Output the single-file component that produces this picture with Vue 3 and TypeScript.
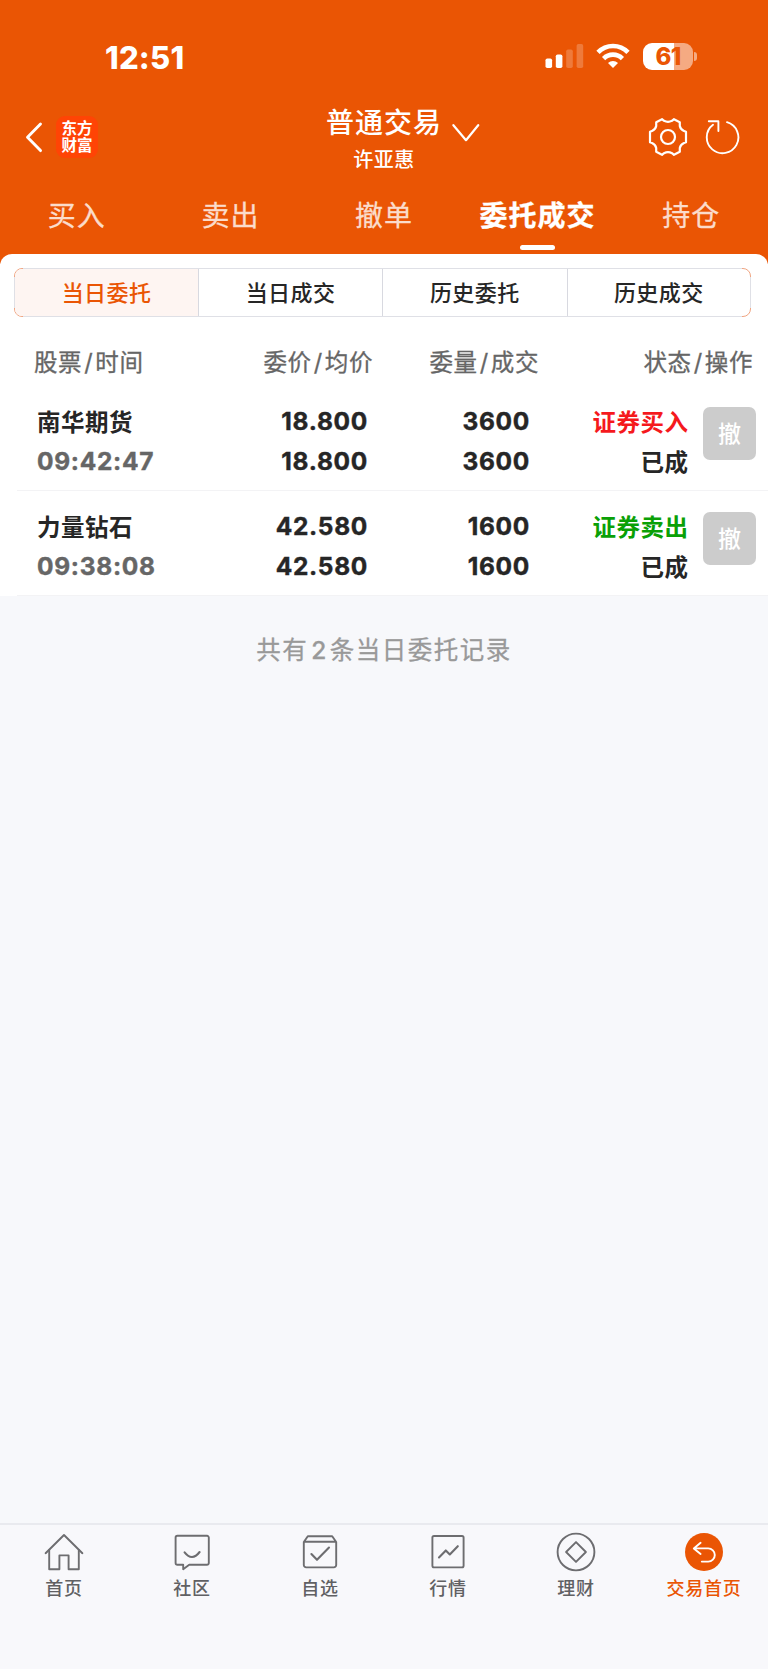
<script setup lang="ts">
interface Order {
  name: string
  time: string
  price: string
  avg: string
  qty: string
  filled: string
  side: string
  kind: 'buy' | 'sell'
  state: string
}

const tabs: string[] = ['买入', '卖出', '撤单', '委托成交', '持仓']
const activeTab = '委托成交'
const segments: string[] = ['当日委托', '当日成交', '历史委托', '历史成交']
const activeSegment = '当日委托'
const columns: [string, string][] = [['股票', '时间'], ['委价', '均价'], ['委量', '成交'], ['状态', '操作']]
const orders: Order[] = [
  { name: '南华期货', time: '09:42:47', price: '18.800', avg: '18.800', qty: '3600', filled: '3600', side: '证券买入', kind: 'buy', state: '已成' },
  { name: '力量钻石', time: '09:38:08', price: '42.580', avg: '42.580', qty: '1600', filled: '1600', side: '证券卖出', kind: 'sell', state: '已成' },
]
const navItems: { id: string; label: string }[] = [
  { id: 'home', label: '首页' },
  { id: 'community', label: '社区' },
  { id: 'watch', label: '自选' },
  { id: 'market', label: '行情' },
  { id: 'wealth', label: '理财' },
  { id: 'trade', label: '交易首页' },
]
</script>

<template>
  <div class="screen">
    <header class="top">
      <div class="status">
        <span class="clock">12:51</span>
        <div class="indicators">
          <svg class="signal" width="39" height="26" viewBox="0 0 39 26" fill="#fff">
            <rect x="0.5" y="15.5" width="6.6" height="9.5" rx="1.8" />
            <rect x="10.8" y="11.5" width="6.6" height="13.5" rx="1.8" />
            <rect x="21.2" y="6.5" width="6.6" height="18.5" rx="1.8" opacity=".22" />
            <rect x="31.6" y="1" width="6.6" height="24" rx="1.8" opacity=".22" />
          </svg>
          <svg class="wifi" width="34" height="26" viewBox="0 0 34 26">
            <g fill="none" stroke="#fff" stroke-width="4.6">
              <path d="M2 9.4C10.2.9 23.8.9 32 9.4" />
              <path d="M7.6 15.6C12.9 10.3 21.1 10.3 26.4 15.6" />
            </g>
            <path d="M12 20C14.8 17.3 19.2 17.3 22 20L17 25Z" fill="#fff" />
          </svg>
          <div class="battery"><span class="level">61</span><i class="tip"></i></div>
        </div>
      </div>
      <div class="navbar">
        <div class="left">
          <svg width="18" height="32" viewBox="0 0 18 32" fill="none" stroke="#fff" stroke-width="2.9" stroke-linecap="round" stroke-linejoin="round">
            <path d="M15.5 3 2.5 16.2 15.5 29.6" />
          </svg>
          <div class="logo"><span>东方</span><span>财富</span></div>
        </div>
        <div class="middle">
          <div class="title">
            <span class="title-text">普通交易</span>
            <svg width="28" height="18" viewBox="0 0 28 18" fill="none" stroke="#fff" stroke-width="2.2" stroke-linecap="round" stroke-linejoin="round">
              <path d="M1.4 1.2 14 16.2 26.2 1.2" />
            </svg>
          </div>
          <div class="account">许亚惠</div>
        </div>
        <div class="right">
          <svg width="40" height="40" viewBox="-20 -20 40 40" fill="none" stroke="#fff" stroke-width="2.2" stroke-linejoin="round">
            <path d="M-6-17.8L-4-16.2Q0-14.2 4-16.2L6-17.8L11.8-14.8V-11Q12.6-7.4 16-6L18-5.2V5.2L16 6Q12.6 7.4 11.8 11V14.8L6 17.8L4 16.2Q0 14.2-4 16.2L-6 17.8L-11.8 14.8V11Q-12.6 7.4-16 6L-18 5.2V-5.2L-16-6Q-12.6-7.4-11.8-11V-14.8Z" />
            <circle r="7" />
          </svg>
          <svg width="36" height="36" viewBox="0 0 36 36" fill="none" stroke="#fff" stroke-width="1.9" stroke-linecap="round" stroke-linejoin="round">
            <path d="M22 3.2A15.8 15.8 0 1 1 8 5.8" />
            <path d="M3.8 2.3H13.4V12" />
          </svg>
        </div>
      </div>
      <nav class="tabs">
        <span v-for="t in tabs" :key="t" class="tab" :class="{ on: t === activeTab }">{{ t }}</span>
      </nav>
    </header>

    <main class="panel">
      <div class="segments">
        <span v-for="s in segments" :key="s" class="segment" :class="{ on: s === activeSegment }">{{ s }}</span>
      </div>
      <div class="grid head">
        <span v-for="c in columns" :key="c[0]" class="cell">{{ c[0] }}<i class="slash">/</i>{{ c[1] }}</span>
      </div>
      <div v-for="o in orders" :key="o.name" class="grid order">
        <div class="cell"><span>{{ o.name }}</span><span class="num time">{{ o.time }}</span></div>
        <div class="cell num"><span>{{ o.price }}</span><span>{{ o.avg }}</span></div>
        <div class="cell num"><span>{{ o.qty }}</span><span>{{ o.filled }}</span></div>
        <div class="cell"><span :class="o.kind">{{ o.side }}</span><span>{{ o.state }}</span></div>
        <button class="cancel">撤</button>
      </div>
    </main>

    <p class="summary">共有<b>2</b>条当日委托记录</p>

    <footer class="bottom">
      <div v-for="n in navItems" :key="n.id" class="item" :class="n.id">
        <svg width="40" height="40" viewBox="-20 -20 40 40" fill="none" stroke="#6d6d70" stroke-width="1.9" stroke-linejoin="round" stroke-linecap="round">
          <g v-if="n.id === 'home'">
            <path d="M-18.4 1.2 0-17 18.4 1.2" />
            <path d="M-14.8-2V17.3H-4.6V3.4H4.6V17.3H14.8V-2" />
          </g>
          <g v-else-if="n.id === 'community'">
            <path d="M-14.6-16.2H15a1.8 1.8 0 0 1 1.8 1.8V11A1.8 1.8 0 0 1 15 12.8H-2.8L-8.8 17.2V12.8H-14.6A1.8 1.8 0 0 1-16.4 11V-14.4A1.8 1.8 0 0 1-14.6-16.2Z" />
            <path d="M-7.4.4Q0 9.8 7.6 0" stroke-width="2.1" />
          </g>
          <g v-else-if="n.id === 'watch'">
            <path d="M-16.2-10-12.2-15.8H12.2L16.2-10V13a2.4 2.4 0 0 1-2.4 2.4H-13.8A2.4 2.4 0 0 1-16.2 13ZM-16-10.2H16" />
            <path d="M-8.6 2-3 7.8 9-4.4" stroke-width="2.1" />
          </g>
          <g v-else-if="n.id === 'market'">
            <rect x="-15.6" y="-16" width="31.2" height="31.4" rx="1.6" />
            <path d="M-9 5.4-2.2-1.6 1.8 2.4 9.8-5.8" stroke-width="2.1" />
          </g>
          <g v-else-if="n.id === 'wealth'">
            <circle r="18.4" />
            <path d="M0-9.9 9.9 0 0 9.9-9.9 0Z" />
          </g>
          <g v-else>
            <circle r="19" fill="#ea5504" stroke="none" />
            <path d="M-3.4-9.2-10.2-3.6-3.4 2M-10-3.6H4.2a6.5 6.5 0 0 1 0 13.2H-2.2" stroke="#fff" />
          </g>
        </svg>
        <span>{{ n.label }}</span>
      </div>
    </footer>
  </div>
</template>

<style>
html, body { margin: 0; background: #f7f8fb; }
</style>

<style scoped>
* { box-sizing: border-box; }
.screen {
  width: 768px; height: 1669px; display: flex; flex-direction: column; overflow: hidden;
  background: #f7f8fb; color: #262626;
  font-family: "Noto Sans CJK SC", Inter, sans-serif;
}
.top { height: 264px; flex: none; background: #ea5504; color: #fff; }
.status { height: 90px; padding: 37px 70px 0 105px; display: flex; justify-content: space-between; }
.clock { font: 800 31px/41px Inter, sans-serif; letter-spacing: 0.2px; }
.indicators { height: 40px; display: flex; align-items: flex-start; padding-top: 6px; }
.wifi { margin-left: 12px; }
.battery {
  position: relative; width: 50px; height: 27px; margin: 0 5px 0 13px; border-radius: 9px;
  background: linear-gradient(90deg, #fff 61%, #f5aa82 61%);
}
.level { display: block; text-align: center; font: 800 24px/27px Inter, sans-serif; color: #ea5504; letter-spacing: -0.8px; }
.tip { position: absolute; left: 51px; top: 9px; width: 3px; height: 9px; border-radius: 0 4px 4px 0; background: #f5aa82; }
.navbar { height: 90px; display: grid; grid-template-columns: 1fr 240px 1fr; }
.left { display: flex; align-items: center; padding-left: 25px; height: 93px; }
.logo {
  width: 42px; height: 42px; margin-left: 13px; border-radius: 9px; background: #ff4405;
  display: flex; flex-direction: column; align-items: center; padding-top: 3px;
}
.logo span { font-weight: 700; font-size: 15.5px; line-height: 17.4px; }
.middle { padding-top: 16px; }
.title { display: grid; grid-template-columns: 1fr auto 1fr; height: 30px; }
.title-text {
  grid-column: 2; font-weight: 500; font-size: 28px; line-height: 31px; letter-spacing: 1px;
}
.title svg { margin: 18px 0 0 10px; }
.account { margin-top: 10.5px; text-align: center; font-weight: 500; font-size: 20px; line-height: 24px; letter-spacing: 0.5px; }
.right { display: flex; align-items: center; justify-content: flex-end; height: 93px; padding-right: 27.3px; gap: 17px; }
.tabs { display: grid; grid-template-columns: repeat(5, 1fr); }
.tab {
  height: 71px; text-align: center; font-size: 28px; line-height: 68px; letter-spacing: 1px; color: #fbdccb;
  -webkit-text-stroke: 0.3px currentColor;
}
.tab.on { font-weight: 700; color: #fff; }
.tab.on::after {
  content: ""; display: block; width: 35px; height: 5px; margin: -3px auto 0; border-radius: 3px; background: #fff;
}
.panel { flex: none; margin-top: -10px; border-radius: 12px 12px 0 0; background: #fff; padding-top: 14px; }
.segments {
  position: relative; height: 49px; margin: 0 17px 0 14px; display: grid; grid-template-columns: 183px 184px 184.5px 1fr;
  border: 1px solid #f0a582; border-radius: 8px;
}
.segments::before, .segments::after { content: ""; position: absolute; pointer-events: none; }
.segments::before { inset: -1px 8px; border: solid #dfe0e6; border-width: 1px 0; }
.segments::after { inset: 8px -1px; border: solid #dfe0e6; border-width: 0 1px; }
.segment {
  text-align: center; font-weight: 500; font-size: 22px; line-height: 45px; letter-spacing: 0.4px;
  border-left: 1px solid #d8d9e0;
}
.segment:first-child { border-left: 0; border-radius: 7px 0 0 7px; }
.segment.on { background: #fef5f2; color: #ea5504; }
.grid { display: grid; grid-template-columns: 204px 169px 166px 149px 1fr; }
.head {
  height: 69px; color: #666; font-size: 23.5px; line-height: 89px; letter-spacing: 0.6px;
  -webkit-text-stroke: 0.3px currentColor;
}
.head .cell { text-align: right; }
.head .cell:first-child { text-align: left; padding-left: 34px; }
.head .cell:last-child { grid-column: 4 / 6; padding-right: 15px; }
.slash { font-family: Inter, sans-serif; font-style: normal; margin: 0 2px; }
.order {
  height: 104.8px; margin-left: 17px; padding-top: 15px; grid-template-columns: 187px 164px 162px 173px 1fr;
  border-bottom: 1px solid #f3f3f5; font-weight: 700; font-size: 23.5px;
}
.order .cell { display: flex; flex-direction: column; text-align: right; letter-spacing: 0.5px; line-height: 40px; }
.order .cell:first-child { text-align: left; padding-left: 20px; }
.order .cell:nth-child(4) { padding-right: 14.5px; }
.order .num { font-family: Inter, sans-serif; font-size: 24.5px; font-weight: 700; letter-spacing: 0.7px; -webkit-text-stroke: 0.4px currentColor; }
.time { color: #666; }
.buy { color: #f5191d; }
.sell { color: #0aa006; }
.cancel {
  width: 53px; height: 53px; margin-top: 6px; border: 0; border-radius: 7px; background: #ccc; color: #fff;
  font: 500 23px/50px "Noto Sans CJK SC", sans-serif; padding: 0 0 4px;
}
.summary {
  margin: 34px 0 0; text-align: center; color: #999; font-size: 24.5px; line-height: 38px; letter-spacing: 1.5px;
  -webkit-text-stroke: 0.3px currentColor;
}
.summary b { font-family: Inter, sans-serif; font-weight: 500; margin: 0 2px 0 3px; }
.bottom {
  margin-top: auto; height: 146px; border-top: 2px solid #e9eaef; background: #f8f8fb; padding-top: 7px;
  display: grid; grid-template-columns: repeat(6, 128px);
}
.item { display: flex; flex-direction: column; align-items: center; color: #606063; font-weight: 500; font-size: 18px; line-height: 30px; letter-spacing: 0.8px; }
.item.trade { color: #ea5504; }
</style>
